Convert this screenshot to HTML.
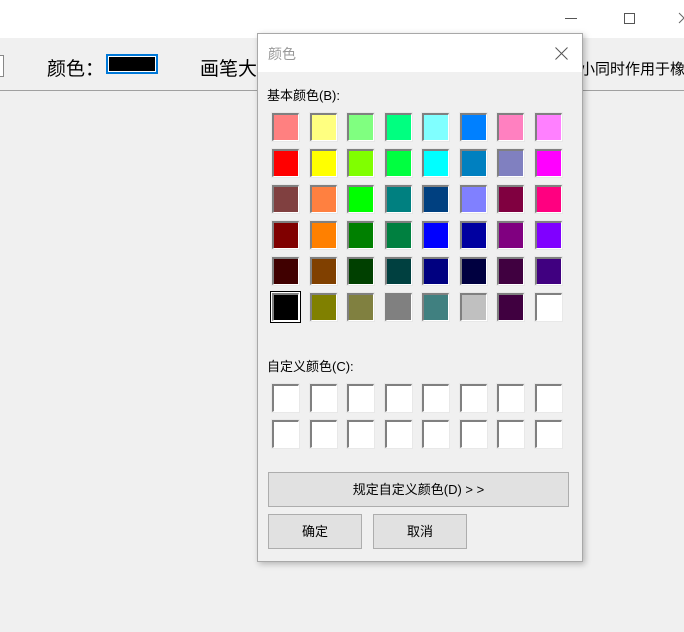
<!DOCTYPE html>
<html><head><meta charset="utf-8"><style>
*{margin:0;padding:0;box-sizing:border-box}
body{width:684px;height:632px;background:#f0f0f0;position:relative;overflow:hidden;font-family:"Liberation Sans","Noto Sans CJK SC",sans-serif}
.abs{position:absolute}
.cell{position:absolute;width:27px;height:28px;border-top:2px solid #808080;border-left:2px solid #808080;border-right:1px solid #fff;border-bottom:1px solid #fff;box-shadow:0 0 0 1px #e8e8e8}
.btn{position:absolute;background:#e1e1e1;border:1px solid #adadad;font-size:13px;color:#000;text-align:center}
</style></head><body>
<div class="abs" style="left:0;top:0;width:684px;height:38px;background:#fff"></div>
<div class="abs" style="left:565px;top:18px;width:12px;height:1px;background:#555"></div>
<div class="abs" style="left:624px;top:13px;width:11px;height:11px;border:1px solid #555"></div>
<svg class="abs" style="left:678px;top:12px" width="12" height="12"><path d="M1 1L11 11M11 1L1 11" stroke="#666" stroke-width="1"/></svg>
<div class="abs" style="left:0;top:90px;width:684px;height:1px;background:#a0a0a0"></div>
<div class="abs" style="left:-10px;top:55px;width:14px;height:22px;border:1px solid #888;background:#fff"></div>
<div class="abs" style="left:47px;top:54px;font-size:19px;color:#000">颜色：</div>
<div class="abs" style="left:106px;top:54px;width:52px;height:20px;border:2px solid #0078d7;background:#000;box-shadow:inset 0 0 0 1px #fff"></div>
<div class="abs" style="left:200px;top:54px;font-size:19px;color:#000">画笔大</div>
<div class="abs" style="left:580px;top:58px;font-size:15px;color:#000;white-space:nowrap">小同时作用于橡</div>

<div class="abs" style="left:257px;top:33px;width:326px;height:529px;background:#f0f0f0;border:1px solid #a8a8a8;box-shadow:2px 2px 6px rgba(0,0,0,.25)">
<div class="abs" style="left:0;top:0;width:324px;height:38px;background:#fff"></div>
<div class="abs" style="left:10px;top:10px;font-size:14px;color:#999">颜色</div>
<svg class="abs" style="left:297px;top:13px" width="13" height="13"><path d="M0.5 0.5L12.5 12.5M12.5 0.5L0.5 12.5" stroke="#555" stroke-width="1"/></svg>
<div class="abs" style="left:9px;top:51px;font-size:13px;color:#000">基本颜色(B):</div>
<div class="abs" style="left:9px;top:322px;font-size:13px;color:#000">自定义颜色(C):</div>
<div id="g"></div>
<div class="btn" style="left:10px;top:438px;width:301px;height:35px;line-height:33px">规定自定义颜色(D) &gt; &gt;</div>
<div class="btn" style="left:10px;top:480px;width:94px;height:35px;line-height:33px">确定</div>
<div class="btn" style="left:115px;top:480px;width:94px;height:35px;line-height:33px">取消</div>
</div>
<script>
var c=["#FF8080","#FFFF80","#80FF80","#00FF80","#80FFFF","#0080FF","#FF80C0","#FF80FF",
"#FF0000","#FFFF00","#80FF00","#00FF40","#00FFFF","#0080C0","#8080C0","#FF00FF",
"#804040","#FF8040","#00FF00","#008080","#004080","#8080FF","#800040","#FF0080",
"#800000","#FF8000","#008000","#008040","#0000FF","#0000A0","#800080","#8000FF",
"#400000","#804000","#004000","#004040","#000080","#000040","#400040","#400080",
"#000000","#808000","#808040","#808080","#408080","#C0C0C0","#400040","#FFFFFF"];
var xs=[14,52,89,127,164,202,239,277],h="";
for(var i=0;i<48;i++){var r=Math.floor(i/8),k=i%8;var ex=i==40?";outline:1px solid #000;outline-offset:1px;box-shadow:0 0 0 1px #fff":"";
h+='<div class="cell" style="left:'+xs[k]+'px;top:'+(79+r*36)+'px;background:'+c[i]+ex+'"></div>';}
for(var i=0;i<16;i++){var r=Math.floor(i/8),k=i%8;
h+='<div class="cell" style="left:'+xs[k]+'px;top:'+(350+r*36)+'px;background:#fff"></div>';}
document.getElementById("g").outerHTML=h;
</script>
</body></html>
